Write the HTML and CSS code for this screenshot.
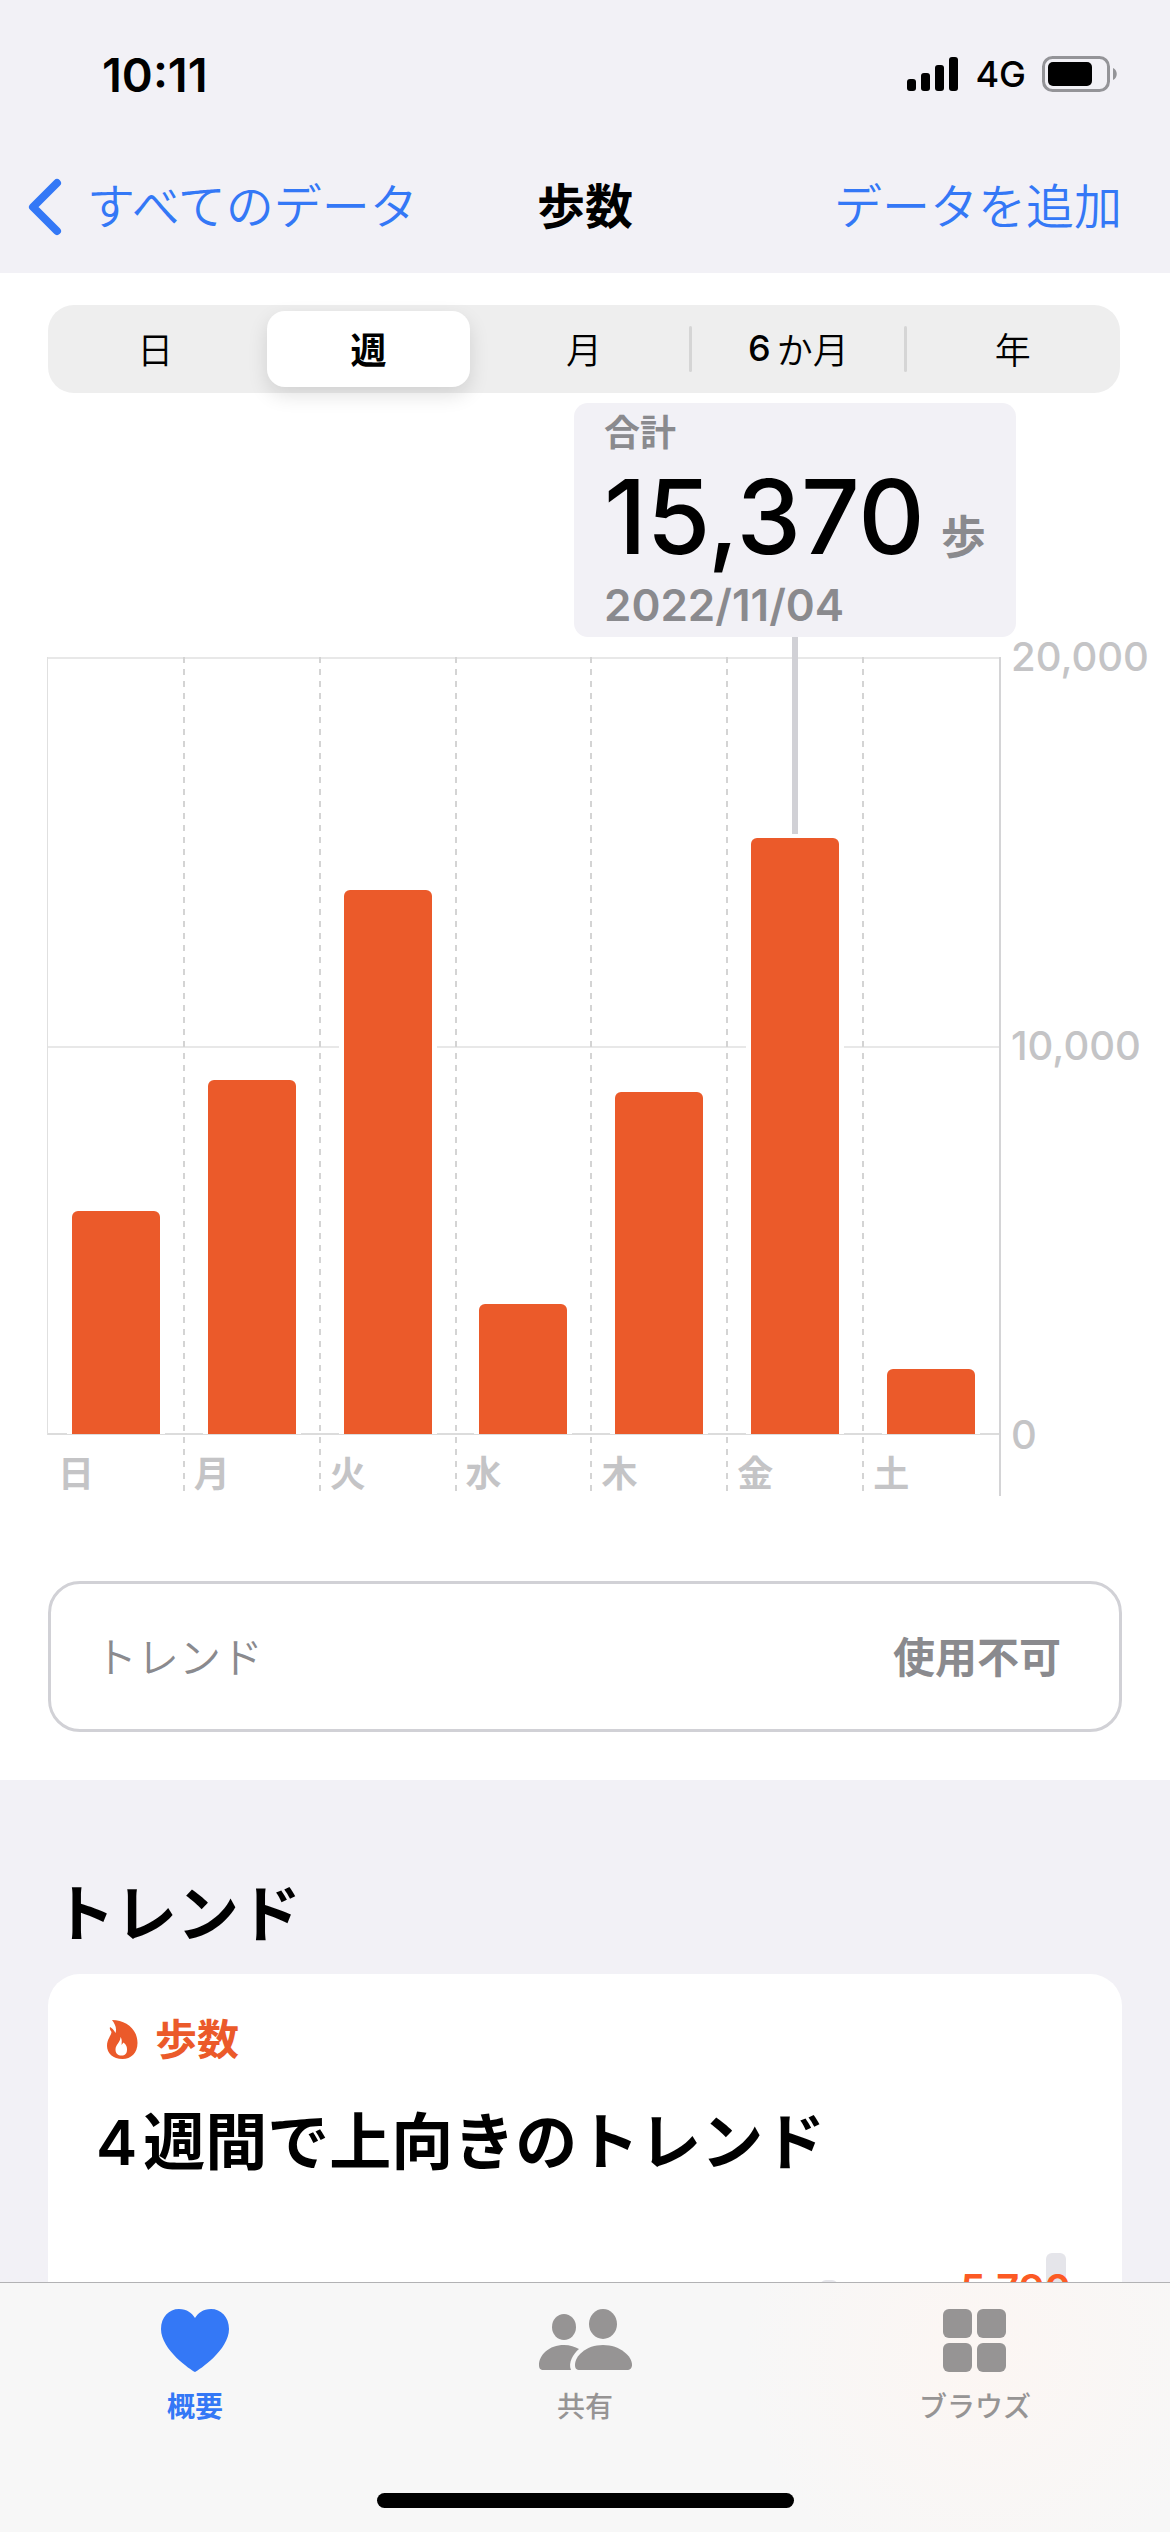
FILE: index.html
```html
<!DOCTYPE html>
<html lang="ja">
<head>
<meta charset="utf-8">
<meta name="viewport" content="width=device-width, initial-scale=1">
<title>歩数</title>
<link rel="stylesheet" href="styles.css">
</head>
<body>
<div class="app">
  <div class="status-bar">
    <time class="clock">10:11</time>
    <div class="status-icons">
      <svg class="signal" width="52" height="34" viewBox="0 0 52 34" aria-hidden="true">
        <rect x="0" y="22" width="9" height="12" rx="3"/>
        <rect x="14" y="16" width="9" height="18" rx="3"/>
        <rect x="28" y="8" width="9" height="26" rx="3"/>
        <rect x="42" y="0" width="9" height="34" rx="3"/>
      </svg>
      <span class="network">4G</span>
      <svg class="battery" width="76" height="36" viewBox="0 0 76 36" aria-hidden="true">
        <rect x="1.500" y="1.500" width="65" height="33" rx="9" fill="none" stroke="#949498" stroke-width="3"/>
        <rect x="6" y="6" width="44" height="24" rx="5"/>
        <path d="M71 12c5 2 5 10 0 12z" fill="#949498"/>
      </svg>
    </div>
  </div>

  <header class="nav-bar">
    <a class="nav-link nav-back" href="#">
      <svg width="34" height="58" viewBox="0 0 34 58" aria-hidden="true"><path d="M29 5 5 29l24 24" fill="none" stroke="currentColor" stroke-width="8" stroke-linecap="round" stroke-linejoin="round"/></svg>
      <span>すべてのデータ</span>
    </a>
    <h1 class="nav-title">歩数</h1>
    <button class="nav-link nav-add" type="button">データを追加</button>
  </header>

  <main class="content">
    <section class="chart-section">
      <div class="segments">
        <button class="segment" type="button">日</button>
        <button class="segment selected" type="button" aria-pressed="true">週</button>
        <button class="segment" type="button">月</button>
        <button class="segment divided" type="button"><span class="figure">6</span>か月</button>
        <button class="segment divided" type="button">年</button>
      </div>

      <div class="chart">
        <div class="plot">
          <div class="grid-line grid-top"></div>
          <div class="grid-line grid-middle"></div>
          <div class="day"><div class="bar-area"><div class="bar" style="height:223px"></div></div><span class="day-label">日</span></div>
          <div class="day"><div class="bar-area"><div class="bar" style="height:354px"></div></div><span class="day-label">月</span></div>
          <div class="day"><div class="bar-area"><div class="bar" style="height:544px"></div></div><span class="day-label">火</span></div>
          <div class="day"><div class="bar-area"><div class="bar" style="height:130px"></div></div><span class="day-label">水</span></div>
          <div class="day"><div class="bar-area"><div class="bar" style="height:342px"></div></div><span class="day-label">木</span></div>
          <div class="day"><div class="bar-area"><div class="marker"></div><div class="bar" style="height:596px"></div></div><span class="day-label">金</span></div>
          <div class="day"><div class="bar-area"><div class="bar" style="height:65px"></div></div><span class="day-label">土</span></div>
        </div>
        <div class="axis">
          <span>20,000</span>
          <span>10,000</span>
          <span>0</span>
        </div>
        <div class="callout">
          <span class="callout-label">合計</span>
          <div class="callout-value"><strong>15,370</strong><span class="unit">歩</span></div>
          <time class="callout-date">2022/11/04</time>
        </div>
      </div>

      <button class="trend-row" type="button"><span>トレンド</span><b>使用不可</b></button>
    </section>

    <section class="trends">
      <h2 class="trends-title">トレンド</h2>
      <article class="card">
        <div class="card-kind">
          <svg width="32" height="40" viewBox="0 0 32 40" aria-hidden="true"><path fill="currentColor" fill-rule="evenodd" d="M5 0C19 0 30.500 9 30.500 23 30.500 33 24 39 15.500 39 6 39 0 33 0 26 0 19 4 16 4.500 12 3 10 2.500 9 3 7 5 8 7 10 8.500 13 10 8 8 4 5 0zM13.500 17c2 3 1 6 1 8l2-2.500c3 2 3.500 5 3.500 7 0 4-2 6-5.500 6s-6-2-6-6c0-5 5-7 5-12.500z"/></svg>
          <span>歩数</span>
        </div>
        <h3 class="card-title"><span class="figure">4</span>週間で上向きのトレンド</h3>
        <div class="mini-chart">
          <div class="mini-bar mini-short"></div>
          <div class="mini-bar mini-tall"></div>
          <span class="mini-value">5,790</span>
        </div>
      </article>
    </section>
  </main>

  <footer class="bottom">
    <nav class="tabs">
      <a class="tab current" href="#">
        <svg width="94" height="64" viewBox="0 0 94 64" aria-hidden="true"><path fill="currentColor" d="M47 64C43 62 13 42 13 21 13 9 21 1 31 1c8 0 13 4 16 9C50 5 55 1 63 1c10 0 18 8 18 20 0 21-30 41-34 43z"/></svg>
        <span>概要</span>
      </a>
      <a class="tab" href="#">
        <svg width="94" height="64" viewBox="0 0 94 64" aria-hidden="true"><g fill="currentColor"><ellipse cx="26" cy="19" rx="12" ry="13"/><ellipse cx="65" cy="16" rx="14" ry="15"/><path d="M6 62c-4 0-5-2-5-5 0-10 10-20 25-20 6 0 11 2 15 4-6 5-11 14-8 21z"/><path d="M42 62c-4 0-5-2-5-5 0-9 11-20 28-20s29 11 29 20c0 3-2 5-5 5z"/></g></svg>
        <span>共有</span>
      </a>
      <a class="tab" href="#">
        <svg width="94" height="64" viewBox="0 0 94 64" aria-hidden="true"><g fill="currentColor"><rect x="15" y="1" width="29" height="29" rx="6"/><rect x="49" y="1" width="29" height="29" rx="6"/><rect x="15" y="35" width="29" height="29" rx="6"/><rect x="49" y="35" width="29" height="29" rx="6"/></g></svg>
        <span>ブラウズ</span>
      </a>
    </nav>
    <div class="home-indicator"></div>
  </footer>
</div>
</body>
</html>
```
FILE: styles.css
```css
* {
  box-sizing: border-box;
}

body {
  margin: 0;
  background: #f2f1f6;
  color: #000;
  font-family: Inter, "Noto Sans CJK JP", sans-serif;
}

button {
  padding: 0;
  border: 0;
  background: none;
  color: inherit;
  font: inherit;
}

a {
  color: inherit;
  text-decoration: none;
}

h1, h2, h3 {
  margin: 0;
}

svg {
  display: block;
}

.app {
  display: flex;
  flex-direction: column;
  height: 100vh;
  overflow: hidden;
}

/* Status bar */

.status-bar {
  display: flex;
  flex: none;
  justify-content: space-between;
  align-items: center;
  height: 148px;
  padding: 0 52px 0 102px;
}

.clock {
  font-size: 47px;
  font-weight: 600;
}

.status-icons {
  display: flex;
  align-items: center;
  gap: 16px;
}

.network {
  font-size: 36px;
  font-weight: 500;
}

/* Navigation bar */

.nav-bar {
  display: grid;
  flex: none;
  grid-template-columns: minmax(0, 1fr) auto minmax(0, 1fr);
  align-items: center;
  height: 125px;
  padding: 0 48px 8px 28px;
  font-size: 48px;
  line-height: 60px;
  white-space: nowrap;
}

.nav-link {
  color: #3478f6;
  font-weight: 350;
}

.nav-back {
  display: flex;
  align-items: center;
  gap: 25px;
}

.nav-title {
  padding-left: 20px;
  font-size: 48px;
  font-weight: 700;
}

.nav-add {
  justify-self: end;
}

/* Chart */

.content {
  flex: 1;
  min-height: 0;
  overflow: hidden;
}

.chart-section {
  padding: 32px 48px 48px;
  background: #fff;
}

.segments {
  display: grid;
  grid-template-columns: repeat(5, 1fr);
  height: 88px;
  margin-right: 2px;
  padding: 6px 0;
  border-radius: 26px;
  background: #eee;
}

.segment {
  display: flex;
  position: relative;
  justify-content: center;
  align-items: center;
  padding-bottom: 2px;
  font-size: 36px;
  font-weight: 350;
}

.segment.selected {
  margin: 0 7px 0 5px;
  border-radius: 18px;
  background: #fff;
  box-shadow: 0 8px 20px rgba(0, 0, 0, 0.12);
  font-weight: 700;
}

.segment.divided::before {
  position: absolute;
  top: 15px;
  bottom: 15px;
  left: -2px;
  width: 3px;
  border-radius: 2px;
  background: #d5d5d5;
  content: "";
}

.figure {
  margin-right: 6px;
  font-weight: 500;
}

.chart {
  display: flex;
  position: relative;
  margin-right: -48px;
  padding-top: 264px;
}

.plot {
  display: grid;
  position: relative;
  flex: 1;
  grid-template-columns: repeat(7, 1fr);
  height: 839px;
  border-right: 2px solid #d4d4d6;
}

.grid-line {
  position: absolute;
  right: 0;
  left: 0;
  height: 2px;
  background: #e8e8e8;
}

.grid-top {
  top: 0;
}

.grid-middle {
  top: 389px;
}

.day {
  display: flex;
  position: relative;
  flex-direction: column;
}

.day::before {
  position: absolute;
  top: 0;
  bottom: 4px;
  left: -1px;
  width: 2px;
  background: repeating-linear-gradient(#d4d4d4 0 6px, transparent 6px 12px);
  content: "";
}

.grid-middle + .day::before {
  bottom: 61px;
  width: 1px;
  background: #e0e0e0;
}

.bar-area {
  display: flex;
  flex-direction: column;
  justify-content: flex-end;
  align-items: center;
  height: 778px;
  border-bottom: 2px solid #dcdcdc;
}

.bar {
  z-index: 1;
  width: 88px;
  margin-bottom: -1px;
  border-radius: 6px 6px 0 0;
  background: #eb5a2a;
  box-shadow: -5px 0 #fff, 5px 0 #fff;
}

.marker {
  z-index: 1;
  flex: 1;
  width: 6px;
  margin: -20px 0 4px;
  background: #d1d1d6;
}

.day-label {
  padding: 18px 0 0 10px;
  color: #c4c4c6;
  font-size: 36px;
  font-weight: 700;
  line-height: 43px;
}

.axis {
  display: flex;
  flex: none;
  flex-direction: column;
  justify-content: space-between;
  width: 169px;
  height: 826px;
  margin-top: -24px;
  padding-left: 10px;
  color: #c4c4c6;
  font-size: 40px;
  font-weight: 500;
  line-height: 48px;
}

.callout {
  position: absolute;
  top: 10px;
  left: 526px;
  width: 442px;
  padding: 8px 30px 4px;
  border-radius: 14px;
  background: #f2f1f6;
  color: #8a8a8e;
  font-weight: 600;
}

.callout-label {
  display: block;
  font-size: 36px;
  font-weight: 700;
  line-height: 44px;
}

.callout-value {
  display: flex;
  align-items: baseline;
  gap: 16px;
  font-size: 45px;
  line-height: 50px;
}

.callout-value strong {
  color: #000;
  font-size: 103px;
  font-weight: 500;
  line-height: 124px;
}

.callout-date {
  display: block;
  padding-bottom: 2px;
  font-size: 44px;
  line-height: 52px;
}

.trend-row {
  display: flex;
  justify-content: space-between;
  align-items: center;
  width: 100%;
  height: 151px;
  margin-top: 85px;
  padding: 0 58px 4px 44px;
  border: 3px solid #d1d1d6;
  border-radius: 32px;
  color: #8a8a8e;
  font-size: 42px;
  font-weight: 350;
}

.trend-row b {
  font-weight: 700;
}

/* Trends */

.trends {
  padding: 90px 48px 0;
}

.trends-title {
  padding-left: 5px;
  font-size: 62px;
  font-weight: 700;
  line-height: 90px;
}

.card {
  margin-top: 14px;
  padding: 40px 48px 0;
  border-radius: 32px;
  background: #fff;
}

.card-kind {
  display: flex;
  align-items: center;
  gap: 16px;
  padding-left: 11px;
  color: #eb5a2a;
  font-size: 42px;
  font-weight: 700;
  line-height: 52px;
}

.card-title {
  margin-top: 32px;
  font-size: 62px;
  font-weight: 700;
  line-height: 90px;
}

.card-title .figure {
  font-weight: 600;
}

.mini-chart {
  position: relative;
  height: 300px;
  margin-top: 64px;
}

.mini-bar {
  position: absolute;
  bottom: 0;
  border-radius: 6px;
  background: #e5e5ea;
}

.mini-tall {
  top: 1px;
  right: 8px;
  width: 20px;
}

.mini-short {
  top: 28px;
  right: 236px;
  width: 18px;
}

.mini-value {
  position: absolute;
  top: 12px;
  right: 3px;
  color: #fc5a24;
  font-size: 40px;
  font-weight: 600;
  line-height: 50px;
}

/* Tab bar */

.bottom {
  flex: none;
  padding-bottom: 24px;
  border-top: 1px solid #b2b2b4;
  background: radial-gradient(circle at 84% 30%, #fcf6f3, #f7f7f7 240px);
}

.tabs {
  display: grid;
  grid-template-columns: repeat(3, 1fr);
  padding-top: 25px;
}

.tab {
  display: flex;
  flex-direction: column;
  align-items: center;
  gap: 14px;
  color: #969494;
  font-size: 28px;
  font-weight: 500;
  line-height: 42px;
}

.tab.current {
  color: #3478f6;
  font-weight: 700;
}

.home-indicator {
  width: 417px;
  height: 15px;
  margin: 65px auto 0;
  border-radius: 8px;
  background: #000;
}
```
